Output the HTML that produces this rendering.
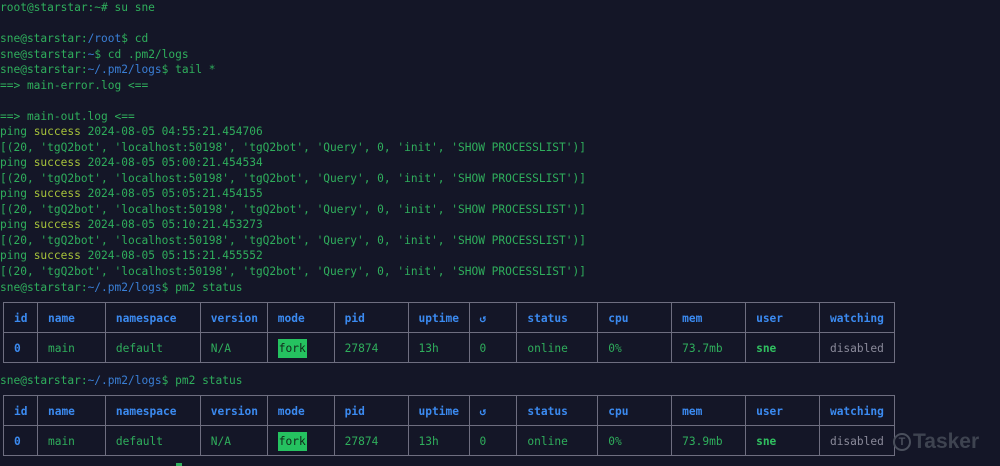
<!DOCTYPE html>
<html><head><style>
body{margin:0;width:1000px;height:466px;background:#141627;overflow:hidden;font-family:"DejaVu Sans Mono","Liberation Mono",monospace;font-size:11.2px;color:#2fae5c;position:relative}
.l{position:absolute;left:0;white-space:pre;line-height:15.5px}
.b{color:#3a7fd6}.y{color:#a6c23a}
table{position:absolute;left:3px;border-collapse:collapse;width:892px}
td{border:1.5px solid #6e6e80;padding:1px 0 0 10px;height:28px;white-space:pre}
tr.h td{color:#3b8af0;font-weight:bold}
.bl{color:#3b8af0;font-weight:bold}.g{color:#8a8a9a}.sn{font-weight:bold;color:#30c060}
.f{background:#25c260;color:#12261a;padding:3px 1px;}
</style></head><body>
<div class="l" style="top:0px">root@starstar:~# su sne</div>
<div class="l" style="top:31px">sne@starstar:<span class="b">/root</span>$ cd</div>
<div class="l" style="top:47px">sne@starstar:<span class="b">~</span>$ cd .pm2/logs</div>
<div class="l" style="top:62px">sne@starstar:<span class="b">~/.pm2/logs</span>$ tail *</div>
<div class="l" style="top:78px">==&gt; main-error.log &lt;==</div>
<div class="l" style="top:109px">==&gt; main-out.log &lt;==</div>
<div class="l" style="top:124px">ping <span class="y">success</span> 2024-08-05 04:55:21.454706</div>
<div class="l" style="top:140px">[(20, 'tgQ2bot', 'localhost:50198', 'tgQ2bot', 'Query', 0, 'init', 'SHOW PROCESSLIST')]</div>
<div class="l" style="top:155px">ping <span class="y">success</span> 2024-08-05 05:00:21.454534</div>
<div class="l" style="top:171px">[(20, 'tgQ2bot', 'localhost:50198', 'tgQ2bot', 'Query', 0, 'init', 'SHOW PROCESSLIST')]</div>
<div class="l" style="top:186px">ping <span class="y">success</span> 2024-08-05 05:05:21.454155</div>
<div class="l" style="top:202px">[(20, 'tgQ2bot', 'localhost:50198', 'tgQ2bot', 'Query', 0, 'init', 'SHOW PROCESSLIST')]</div>
<div class="l" style="top:217px">ping <span class="y">success</span> 2024-08-05 05:10:21.453273</div>
<div class="l" style="top:233px">[(20, 'tgQ2bot', 'localhost:50198', 'tgQ2bot', 'Query', 0, 'init', 'SHOW PROCESSLIST')]</div>
<div class="l" style="top:248px">ping <span class="y">success</span> 2024-08-05 05:15:21.455552</div>
<div class="l" style="top:264px">[(20, 'tgQ2bot', 'localhost:50198', 'tgQ2bot', 'Query', 0, 'init', 'SHOW PROCESSLIST')]</div>
<div class="l" style="top:280px">sne@starstar:<span class="b">~/.pm2/logs</span>$ pm2 status</div>
<table style="top:302px">
<colgroup><col style="width:34px"><col style="width:68px"><col style="width:95px"><col style="width:67px"><col style="width:67px"><col style="width:74px"><col style="width:61px"><col style="width:48px"><col style="width:81px"><col style="width:74px"><col style="width:74px"><col style="width:74px"><col style="width:75px"></colgroup>
<tr class="h"><td>id</td><td>name</td><td>namespace</td><td>version</td><td>mode</td><td>pid</td><td>uptime</td><td>↺</td><td>status</td><td>cpu</td><td>mem</td><td>user</td><td>watching</td></tr>
<tr><td class="bl">0</td><td>main</td><td>default</td><td>N/A</td><td><span class="f">fork</span></td><td>27874</td><td>13h</td><td>0</td><td>online</td><td>0%</td><td>73.7mb</td><td class="sn">sne</td><td class="g">disabled</td></tr>
</table>
<div class="l" style="top:373px">sne@starstar:<span class="b">~/.pm2/logs</span>$ pm2 status</div>
<table style="top:395px">
<colgroup><col style="width:34px"><col style="width:68px"><col style="width:95px"><col style="width:67px"><col style="width:67px"><col style="width:74px"><col style="width:61px"><col style="width:48px"><col style="width:81px"><col style="width:74px"><col style="width:74px"><col style="width:74px"><col style="width:75px"></colgroup>
<tr class="h"><td>id</td><td>name</td><td>namespace</td><td>version</td><td>mode</td><td>pid</td><td>uptime</td><td>↺</td><td>status</td><td>cpu</td><td>mem</td><td>user</td><td>watching</td></tr>
<tr><td class="bl">0</td><td>main</td><td>default</td><td>N/A</td><td><span class="f">fork</span></td><td>27874</td><td>13h</td><td>0</td><td>online</td><td>0%</td><td>73.9mb</td><td class="sn">sne</td><td class="g">disabled</td></tr>
</table>
<div style="position:absolute;left:893px;top:433px;width:18px;height:18px;border:2px solid #4a4f5c;border-radius:50%;box-sizing:border-box;color:#4a4f5c;font:bold 11px 'Liberation Sans',sans-serif;text-align:center;line-height:14px">T</div>
<div style="position:absolute;left:913px;top:430px;color:#3e4350;font:bold 21px 'Liberation Sans',sans-serif">Tasker</div>
<div style="position:absolute;left:176px;top:463px;width:6px;height:3px;background:#2fae5c"></div>
</body></html>
